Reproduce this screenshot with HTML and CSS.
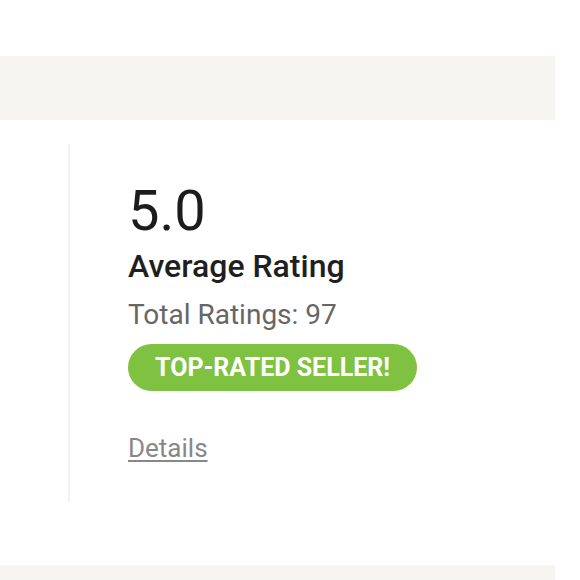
FILE: index.html
```html
<!DOCTYPE html>
<html>
<head>
<meta charset="utf-8">
<link rel="stylesheet" href="styles.css">
</head>
<body>
<div class="page">
  <div class="band"></div>
  <section class="rating">
    <div class="rating-col">
      <div class="score">5.0</div>
      <div class="label">Average Rating</div>
      <div class="total">Total Ratings: 97</div>
      <span class="badge">TOP-RATED SELLER!</span>
      <a class="details" href="#">Details</a>
    </div>
  </section>
  <div class="band band-bottom"></div>
</div>
</body>
</html>
```
FILE: styles.css
```css
html, body {
  margin: 0;
  padding: 0;
  background: #ffffff;
}
body {
  font-family: Roboto, "Liberation Sans", sans-serif;
  color: #222222;
}
.page {
  width: 555px;
  padding-top: 56px;
}
.band {
  height: 64px;
  background: #f6f5f2;
}
.rating {
  padding: 24px 0 63px 68px;
}
.rating-col {
  border-left: 2px solid #f3f3f3;
  height: 358px;
  padding-left: 58px;
  padding-top: 35px;
  box-sizing: border-box;
  display: flex;
  flex-direction: column;
  align-items: flex-start;
}
.score {
  font-size: 56px;
  line-height: 64px;
  font-weight: 400;
  color: #1c1c1c;
}
.label {
  margin-top: 5px;
  font-size: 32px;
  line-height: 36px;
  font-weight: 500;
  color: #1f1f1f;
}
.total {
  margin-top: 15px;
  font-size: 28px;
  line-height: 32px;
  color: #666666;
}
.badge {
  margin-top: 13px;
  height: 47px;
  line-height: 47px;
  padding: 0 27px;
  border-radius: 24px;
  background: #7fc241;
  color: #ffffff;
  font-size: 25px;
  font-weight: 700;
  white-space: nowrap;
}
.details {
  margin-top: 42px;
  font-size: 26px;
  line-height: 30px;
  color: #888888;
  text-decoration: underline;
  text-underline-offset: 3px;
}
.band-bottom {
  height: 40px;
}
```
